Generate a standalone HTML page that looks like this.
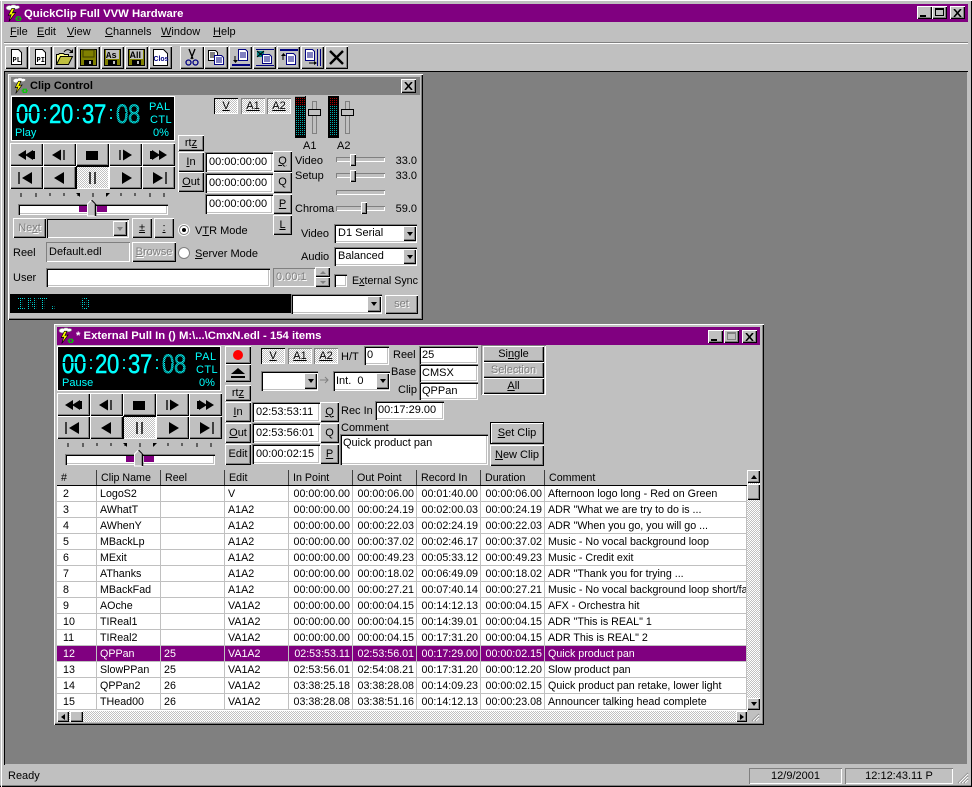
<!DOCTYPE html>
<html><head><meta charset="utf-8"><title>QuickClip</title>
<style>
*{box-sizing:border-box}
html,body{margin:0;padding:0}
body{width:972px;height:787px;position:relative;overflow:hidden;background:#c0c0c0;font:11px/13px "Liberation Sans",Arial,sans-serif;color:#000}
div,span.t,svg.a{position:absolute}
.t{position:absolute;white-space:nowrap;margin-top:1px}
.r{background:#c0c0c0;box-shadow:inset 1px 1px #fff,inset -1px -1px #000,inset -2px -2px #808080;display:flex;align-items:center;justify-content:center;white-space:nowrap}
.s{background:#fff;box-shadow:inset 1px 1px #808080,inset 2px 2px #000,inset -1px -1px #fff,inset -2px -2px #c0c0c0;display:flex;align-items:center;padding-left:4px;white-space:nowrap;overflow:hidden}
.d{background:#c0c0c0;box-shadow:inset 1px 1px #808080,inset -1px -1px #fff;display:flex;align-items:center;padding-left:3px;white-space:nowrap}
.h{background:conic-gradient(#fff 25%,#c0c0c0 0 50%,#fff 0 75%,#c0c0c0 0) 0 0/2px 2px}
.off{color:#808080;text-shadow:1px 1px #fff}
.dn{width:0;height:0;border-left:3px solid transparent;border-right:3px solid transparent;border-top:4px solid #000;display:block}
.up{width:0;height:0;border-left:3px solid transparent;border-right:3px solid transparent;border-bottom:4px solid #000;display:block}
.lf{width:0;height:0;border-top:3px solid transparent;border-bottom:3px solid transparent;border-right:4px solid #000;display:block}
.rt{width:0;height:0;border-top:3px solid transparent;border-bottom:3px solid transparent;border-left:4px solid #000;display:block}
.tog{background:conic-gradient(#fff 25%,#c0c0c0 0 50%,#fff 0 75%,#c0c0c0 0) 0 0/2px 2px;box-shadow:inset 1px 1px #000,inset -1px -1px #fff;display:flex;align-items:center;justify-content:center}
table{border-collapse:separate;border-spacing:0;table-layout:fixed;background:#fff;font:10.7px/13px "Liberation Sans",Arial,sans-serif}
td{height:16px;padding:2px 0 0 3px;border-right:1px solid #c0c0c0;border-bottom:1px solid #c0c0c0;white-space:nowrap;overflow:hidden}
td.n{text-align:right;padding:2px 2px 0 0}
td.c{padding-left:6px}
td.m{padding-left:3px}
tr.sel td{background:#800080;color:#fff}
.hd{height:15px;top:470px;border-right:1px solid #404040;padding-left:4px;white-space:nowrap;line-height:16px;font-size:10.7px}
.title{color:#fff;font-weight:bold;font-size:11.3px;line-height:17px;white-space:nowrap}
</style></head>
<body>
<svg width="0" height="0" style="position:absolute">
<defs>
<symbol id="ic" viewBox="0 0 16 16"><path d="M1 3.5c0-2 3-2.500 4-2 1-1 4-1 5 0 2-.5 3 .5 3 1.500-1 1.500-3 1.500-4 1.500l-4 1c-2 0-4-.5-4-2z" fill="#fff" stroke="#808080" stroke-width=".6"/><path d="M6 4l-3 6 2.500-.5-2 6 6-8-3 .5 2-4z" fill="#ff0" stroke="#000" stroke-width=".6"/><path d="M9 13h2M13 13h2" stroke="#0c0" stroke-width="1"/><rect x="10.500" y="11.500" width="3" height="3" fill="none" stroke="#0c0"/></symbol>
<symbol id="i1" viewBox="0 0 33 22"><path d="M8 11l8-5v10zM15 11l8-5v10z"/><rect x="23" y="7" width="2" height="8"/></symbol>
<symbol id="i2" viewBox="0 0 33 22"><path d="M9 11l9-5.500v11z"/><rect x="20" y="6" width="2" height="10" fill="#404040"/></symbol>
<symbol id="i3" viewBox="0 0 33 22"><rect x="10" y="7" width="12" height="9"/></symbol>
<symbol id="i4" viewBox="0 0 33 22"><rect x="10" y="6" width="2" height="10" fill="#404040"/><path d="M14 5.500l9 5.500-9 5.500z"/></symbol>
<symbol id="i5" viewBox="0 0 33 22"><rect x="8" y="7" width="2" height="8"/><path d="M10 6l8 5-8 5zM17 6l8 5-8 5z"/></symbol>
<symbol id="i6" viewBox="0 0 33 22"><rect x="8" y="5" width="2" height="12" fill="#404040"/><path d="M12 11l10-6v12z"/></symbol>
<symbol id="i7" viewBox="0 0 33 22"><path d="M11 11l10-6v12z"/></symbol>
<symbol id="i8" viewBox="0 0 33 22"><rect x="13" y="5" width="2" height="12" fill="#404040"/><rect x="18" y="5" width="2" height="12" fill="#404040"/></symbol>
<symbol id="i9" viewBox="0 0 33 22"><path d="M13 5l10 6-10 6z"/></symbol>
<symbol id="i10" viewBox="0 0 33 22"><path d="M11 5l10 6-10 6z"/><rect x="23" y="5" width="2" height="12" fill="#404040"/></symbol>
<pattern id="dot" width="2" height="2" patternUnits="userSpaceOnUse"><rect width="2" height="2" fill="#005858"/><rect width="1" height="1" fill="#0ff"/><rect x="1" y="1" width="1" height="1" fill="#0ff"/></pattern>
<pattern id="dim" width="2" height="2" patternUnits="userSpaceOnUse"><rect width="1" height="1" fill="#0dd"/></pattern>
<pattern id="meter" width="2" height="2" patternUnits="userSpaceOnUse"><rect width="1" height="1" fill="#0aa"/></pattern>
<pattern id="meterr" width="2" height="2" patternUnits="userSpaceOnUse"><rect width="1" height="1" fill="#a00"/></pattern>
</defs>
</svg>

<!-- main title -->
<div style="left:4px;top:4px;width:964px;height:18px;background:#800080"></div>
<svg class="a" style="left:5px;top:4px" width="18" height="18"><use href="#ic"/></svg>
<div class="title" style="left:24px;top:6px">QuickClip Full VVW Hardware</div>
<div class="r" style="left:917px;top:6px;width:15px;height:13px"><div style="left:3px;top:9px;width:6px;height:2px;background:#000"></div></div>
<div class="r" style="left:932px;top:6px;width:15px;height:13px"><div style="left:3px;top:2px;width:9px;height:8px;border:1px solid #000;border-top-width:2px"></div></div>
<div class="r" style="left:950px;top:6px;width:15px;height:13px"><svg width="9" height="8"><path d="M1 0l7 8M8 0l-7 8" stroke="#000" stroke-width="1.600"/></svg></div>

<!-- menu -->
<span class="t" style="left:10px;top:25px"><u>F</u>ile</span>
<span class="t" style="left:37px;top:25px"><u>E</u>dit</span>
<span class="t" style="left:67px;top:25px"><u>V</u>iew</span>
<span class="t" style="left:105px;top:25px"><u>C</u>hannels</span>
<span class="t" style="left:161px;top:25px"><u>W</u>indow</span>
<span class="t" style="left:213px;top:25px"><u>H</u>elp</span>
<div style="left:4px;top:42px;width:964px;height:1px;background:#808080"></div>
<div style="left:4px;top:43px;width:964px;height:1px;background:#fff"></div>

<!-- toolbar -->
<div class="r" style="left:5px;top:46px;width:23px;height:23px"><svg width="23" height="23"><path d="M6.500 3.500h7l3 3v12h-10z" fill="#fff" stroke="#000"/><text x="7.500" y="16" font-family="Liberation Mono" font-weight="bold" font-size="7">PL</text></svg></div>
<div class="r" style="left:29px;top:46px;width:23px;height:23px"><svg width="23" height="23"><path d="M6.500 3.500h7l3 3v12h-10z" fill="#fff" stroke="#000"/><text x="7.500" y="16" font-family="Liberation Mono" font-weight="bold" font-size="7">PI</text></svg></div>
<div class="r" style="left:53px;top:46px;width:23px;height:23px"><svg width="23" height="23"><path d="M3.500 18.500v-10h2l1-1h4l1 1h4v2" fill="#ff8" stroke="#000"/><path d="M3.500 18.500l4-8h12l-4 8z" fill="#c0c040" stroke="#000"/><path d="M11 6c2-3 5-3 7-1" fill="none" stroke="#000"/><path d="M20 3v4h-4z"/></svg></div>
<div class="r" style="left:77px;top:46px;width:23px;height:23px"><svg width="23" height="23"><rect x="3.500" y="3.500" width="16" height="16" fill="#808000" stroke="#000"/><rect x="6" y="4" width="11" height="7" fill="#808000" stroke="#404000"/><rect x="7" y="14" width="9" height="5" fill="#000"/><rect x="12" y="15" width="2" height="3" fill="#c0c0c0"/></svg></div>
<div class="r" style="left:101px;top:46px;width:23px;height:23px"><svg width="23" height="23"><rect x="3.500" y="3.500" width="16" height="16" fill="#808000" stroke="#000"/><rect x="5" y="4" width="13" height="9" fill="#c0c0c0"/><text x="5" y="12" font-family="Liberation Mono" font-weight="bold" font-size="9">As</text><rect x="7" y="14" width="9" height="5" fill="#000"/><rect x="12" y="15" width="2" height="3" fill="#c0c0c0"/></svg></div>
<div class="r" style="left:125px;top:46px;width:23px;height:23px"><svg width="23" height="23"><rect x="3.500" y="3.500" width="16" height="16" fill="#808000" stroke="#000"/><rect x="5" y="4" width="13" height="9" fill="#c0c0c0"/><text x="4.500" y="12" font-family="Liberation Sans" font-weight="bold" font-size="9">All</text><rect x="7" y="14" width="9" height="5" fill="#000"/><rect x="12" y="15" width="2" height="3" fill="#c0c0c0"/></svg></div>
<div class="r" style="left:149px;top:46px;width:23px;height:23px"><svg width="23" height="23"><path d="M4.500 3.500h10l4 4v12h-14z" fill="#fff" stroke="#000"/><text x="4.500" y="15" font-family="Liberation Sans" font-weight="bold" font-size="7.500" fill="#000080" textLength="15" lengthAdjust="spacingAndGlyphs">Clos</text></svg></div>

<div class="r" style="left:180px;top:46px;width:24px;height:23px"><svg width="24" height="23"><path d="M9 3l4 10M15 3l-4 10" stroke="#000" stroke-width="1.300"/><circle cx="8.500" cy="16.500" r="2.500" fill="none" stroke="#000080" stroke-width="1.300"/><circle cx="15.500" cy="16.500" r="2.500" fill="none" stroke="#000080" stroke-width="1.300"/></svg></div>
<div class="r" style="left:204px;top:46px;width:24px;height:23px"><svg width="24" height="23"><path d="M4.500 4.500h7l2 2v8h-9z" fill="#fff" stroke="#000"/><path d="M6 7h5M6 9h5M6 11h5" stroke="#000"/><path d="M10.500 9.500h7l2 2v7h-9z" fill="#fff" stroke="#000080"/><path d="M12 12h6M12 14h6M12 16h6" stroke="#000080"/></svg></div>
<div class="r" style="left:229px;top:46px;width:23px;height:23px"><svg width="23" height="23"><path d="M9.500 3.500h7l2 2v9h-9z" fill="#fff" stroke="#000080"/><path d="M11 7h6M11 9h6M11 11h6" stroke="#000080"/><path d="M6 10v5" stroke="#000"/><path d="M4 14h5l-2.500 3z"/><rect x="3" y="18" width="18" height="2" fill="#000080"/></svg></div>
<div class="r" style="left:253px;top:46px;width:23px;height:23px"><svg width="23" height="23"><rect x="3" y="3" width="18" height="1" fill="#000080"/><rect x="3" y="19" width="18" height="1" fill="#000080"/><rect x="4" y="5" width="7" height="6" fill="#008080"/><path d="M4 5l7 6M11 5l-7 6" stroke="#000"/><path d="M9.500 8.500h7l2 2v7h-9z" fill="#fff" stroke="#000080"/><path d="M11 11h6M11 13h6M11 15h6" stroke="#000080"/></svg></div>
<div class="r" style="left:277px;top:46px;width:23px;height:23px"><svg width="23" height="23"><rect x="3" y="3" width="18" height="2" fill="#000080"/><path d="M9.500 7.500h7l2 2v9h-9z" fill="#fff" stroke="#000080"/><path d="M11 11h6M11 13h6M11 15h6" stroke="#000080"/><path d="M6 9v5" stroke="#000"/><path d="M4 10h5l-2.500-3z"/></svg></div>
<div class="r" style="left:301px;top:46px;width:23px;height:23px"><svg width="23" height="23"><path d="M4.500 3.500h7l2 2v9h-9z" fill="#fff" stroke="#000080"/><path d="M6 7h6M6 9h6M6 11h6" stroke="#000080"/><path d="M8 17h6" stroke="#000"/><path d="M13 15v4l3-2z"/><rect x="16" y="3" width="1" height="17" fill="#000080"/><rect x="19" y="3" width="1" height="17" fill="#000080"/></svg></div>
<div class="r" style="left:325px;top:46px;width:23px;height:23px"><svg width="23" height="23"><path d="M5 5l13 13M18 5L5 18" stroke="#000" stroke-width="2.400"/></svg></div>

<!-- MDI -->
<div style="left:4px;top:71px;width:964px;height:694px;background:#808080;box-shadow:inset 1px 1px #000,inset -1px -1px #c0c0c0"></div>

<!-- Clip Control window -->
<div class="r" style="left:8px;top:74px;width:415px;height:246px"></div>
<div style="left:11px;top:77px;width:409px;height:18px;background:#808080"></div>
<svg class="a" style="left:12px;top:77px" width="17" height="17"><use href="#ic"/></svg>
<div class="title" style="left:30px;top:78px;color:#000;font-size:11px">Clip Control</div>
<div class="r" style="left:401px;top:79px;width:15px;height:14px"><svg width="9" height="8"><path d="M1 0l7 8M8 0l-7 8" stroke="#000" stroke-width="1.600"/></svg></div>

<div style="left:11px;top:96px;width:164px;height:45px;background:#000;border:1px solid #fff"></div>
<svg class="a" style="left:12px;top:97px" width="162" height="43"><g transform="translate(-12,-97)">
<g font-family="Liberation Sans" fill="#0ff">
<text transform="translate(0,123) scale(.82,1)" font-size="27" stroke="#0ff" stroke-width=".5" x="19.500 34.100 59.800 74.400 100 114.600">002037</text>
<text font-size="18" x="42.500 75.500 108.500" y="119">:::</text>
<text transform="translate(0,123) scale(.82,1)" font-size="27" x="141.500 156.100" fill="url(#dot)" stroke="url(#dot)" stroke-width=".6">08</text>
<rect x="16" y="112" width="26" height="1" fill="#000"/><rect x="118" y="112" width="8" height="1" fill="#000"/>
<text x="149" y="110" font-size="11" letter-spacing=".6">PAL</text><text x="150" y="123" font-size="11" letter-spacing=".4">CTL</text>
<text x="15" y="136" font-size="11">Play</text><text x="153" y="136" font-size="11">0%</text>
</g></g></svg>

<div class="r" style="left:10px;top:143px;width:33px;height:23px"><svg width="33" height="22"><use href="#i1"/></svg></div>
<div class="r" style="left:43px;top:143px;width:33px;height:23px"><svg width="33" height="22"><use href="#i2"/></svg></div>
<div class="r" style="left:76px;top:143px;width:33px;height:23px"><svg width="33" height="22"><use href="#i3"/></svg></div>
<div class="r" style="left:109px;top:143px;width:33px;height:23px"><svg width="33" height="22"><use href="#i4"/></svg></div>
<div class="r" style="left:142px;top:143px;width:33px;height:23px"><svg width="33" height="22"><use href="#i5"/></svg></div>
<div class="r" style="left:10px;top:166px;width:33px;height:23px"><svg width="33" height="22"><use href="#i6"/></svg></div>
<div class="r" style="left:43px;top:166px;width:33px;height:23px"><svg width="33" height="22"><use href="#i7"/></svg></div>
<div class="tog" style="left:76px;top:166px;width:33px;height:23px"><svg width="33" height="22"><use href="#i8"/></svg></div>
<div class="r" style="left:109px;top:166px;width:33px;height:23px"><svg width="33" height="22"><use href="#i9"/></svg></div>
<div class="r" style="left:142px;top:166px;width:33px;height:23px"><svg width="33" height="22"><use href="#i10"/></svg></div>

<svg class="a" style="left:10px;top:190px" width="170" height="30"><path d="M11 3v4M26 3v4M40 3v3M54 3v3M68 3v3M97 3v3M111 3v3M125 3v3M140 3v4M154 3v4M83 3v4" stroke="#000"/><path d="M66 3l4 0 0 4zM100 3l-4 0 0 4z"/></svg>
<div class="s" style="left:18px;top:204px;width:150px;height:11px;background:#fff"></div>
<div style="left:79px;top:206px;width:9px;height:6px;background:#800080"></div>
<div style="left:97px;top:206px;width:10px;height:6px;background:#800080"></div>
<svg class="a" style="left:86px;top:199px" width="12" height="18"><path d="M1.500 17V5L5.500 1 9.500 5V17z" fill="#c0c0c0" stroke="#fff"/><path d="M9.500 5V17" stroke="#000" stroke-width="1.500"/><path d="M5.500 1L9.500 5" stroke="#000"/></svg>

<div class="r off" style="left:13px;top:218px;width:33px;height:20px">Ne<u>x</u>t</div>
<div class="d" style="left:47px;top:219px;width:82px;height:19px;box-shadow:inset 1px 1px #000,inset -1px -1px #fff"></div>
<div class="r" style="left:113px;top:221px;width:14px;height:15px"><i style="border-top-color:#808080" class="dn"></i></div>
<div class="r" style="left:132px;top:218px;width:20px;height:20px"><u>±</u></div>
<div class="r" style="left:154px;top:218px;width:20px;height:20px"><u>:</u></div>
<svg class="a" style="left:177px;top:223px" width="14" height="14"><circle cx="7" cy="7" r="5.500" fill="#c0c0c0" stroke="#fff"/><circle cx="7" cy="7" r="4.500" fill="#fff" stroke="#808080"/><circle cx="7" cy="7" r="2"/></svg>
<span class="t" style="left:195px;top:224px">V<u>T</u>R Mode</span>
<span class="t" style="left:13px;top:246px">Reel</span>
<div class="d" style="left:46px;top:242px;width:84px;height:20px;box-shadow:inset 1px 1px #808080,inset -1px -1px #fff">Default.edl</div>
<div class="r off" style="left:132px;top:242px;width:44px;height:20px"><u>B</u>rowse</div>
<svg class="a" style="left:177px;top:246px" width="14" height="14"><circle cx="7" cy="7" r="5.500" fill="#fff" stroke="#808080"/></svg>
<span class="t" style="left:195px;top:247px"><u>S</u>erver Mode</span>
<span class="t" style="left:13px;top:271px">User</span>
<div class="s" style="left:46px;top:268px;width:224px;height:19px"></div>
<div class="d off" style="left:273px;top:268px;width:42px;height:19px">0.00:1</div>
<div class="r" style="left:315px;top:267px;width:15px;height:10px"><i class="up" style="border-bottom-color:#808080;border-bottom-width:3px"></i></div>
<div class="r" style="left:315px;top:277px;width:15px;height:10px"><i class="dn" style="border-top-color:#808080;border-top-width:3px"></i></div>
<div class="s" style="left:334px;top:274px;width:13px;height:13px"></div>
<span class="t" style="left:352px;top:274px;font-size:10.7px">E<u>x</u>ternal Sync</span>

<div style="left:10px;top:294px;width:281px;height:19px;background:#000"></div>
<svg class="a" style="left:10px;top:294px" width="120" height="19"><text x="6 17 28 38 70" y="15" font-family="Liberation Mono" font-size="17" fill="url(#dim)" stroke="url(#dim)" stroke-width=".6">INT.0</text></svg>
<div class="s" style="left:291px;top:294px;width:91px;height:20px"></div>
<div class="r" style="left:367px;top:296px;width:14px;height:16px"><i class="dn"></i></div>
<div class="r off" style="left:385px;top:295px;width:33px;height:19px">set</div>

<div class="tog" style="left:214px;top:98px;width:24px;height:16px"><u>V</u></div>
<div class="tog" style="left:241px;top:98px;width:24px;height:16px;box-shadow:inset 1px 1px #808080,inset -1px -1px #fff"><u>A1</u></div>
<div class="tog" style="left:267px;top:98px;width:24px;height:16px;box-shadow:inset 1px 1px #808080,inset -1px -1px #fff"><u>A2</u></div>

<svg class="a" style="left:294px;top:96px" width="65" height="42">
<rect x="1" y="0" width="11" height="42" fill="#000"/><rect x="2" y="2" width="9" height="7" fill="url(#meterr)"/><rect x="2" y="9" width="9" height="31" fill="url(#meter)"/><rect x="1" y="0" width="10" height="1" fill="#fff" opacity=".6"/>
<rect x="34" y="0" width="11" height="42" fill="#000"/><rect x="35" y="2" width="9" height="7" fill="url(#meterr)"/><rect x="35" y="9" width="9" height="31" fill="url(#meter)"/>
<rect x="18.500" y="5.500" width="4" height="32" fill="#c0c0c0" stroke="#808080"/><rect x="51.500" y="5.500" width="4" height="32" fill="#c0c0c0" stroke="#808080"/>
<rect x="14.500" y="13.500" width="12" height="6" fill="#c0c0c0" stroke="#000"/><rect x="47.500" y="13.500" width="12" height="6" fill="#c0c0c0" stroke="#000"/>
</svg>
<span class="t" style="left:303px;top:139px">A1</span>
<span class="t" style="left:337px;top:139px">A2</span>

<div class="r" style="left:178px;top:135px;width:26px;height:16px"><u style="text-decoration:none">rt<u>z</u></u></div>
<div class="r" style="left:178px;top:152px;width:26px;height:20px"><u>I</u>n</div>
<div class="r" style="left:178px;top:172px;width:26px;height:20px"><u>O</u>ut</div>
<div class="s" style="left:205px;top:152px;width:68px;height:20px">00:00:00:00</div>
<div class="s" style="left:205px;top:173px;width:68px;height:20px">00:00:00:00</div>
<div class="s" style="left:205px;top:194px;width:68px;height:20px">00:00:00:00</div>
<div class="r" style="left:273px;top:151px;width:19px;height:21px"><u>Q</u></div>
<div class="r" style="left:273px;top:172px;width:19px;height:21px">Q</div>
<div class="r" style="left:273px;top:194px;width:19px;height:20px"><u>P</u></div>
<div class="r" style="left:273px;top:215px;width:19px;height:20px"><u>L</u></div>

<span class="t" style="left:295px;top:154px">Video</span>
<span class="t" style="left:295px;top:169px">Setup</span>
<span class="t" style="left:295px;top:202px">Chroma</span>
<div class="d" style="left:336px;top:157px;width:49px;height:5px"></div>
<div class="d" style="left:336px;top:173px;width:49px;height:5px"></div>
<div class="d" style="left:336px;top:190px;width:49px;height:5px"></div>
<div class="d" style="left:336px;top:206px;width:49px;height:5px"></div>
<div class="r" style="left:350px;top:154px;width:6px;height:12px"></div>
<div class="r" style="left:350px;top:170px;width:6px;height:12px"></div>
<div class="r" style="left:361px;top:202px;width:6px;height:12px"></div>
<span class="t" style="left:386px;width:31px;text-align:right;top:154px">33.0</span>
<span class="t" style="left:386px;width:31px;text-align:right;top:169px">33.0</span>
<span class="t" style="left:386px;width:31px;text-align:right;top:202px">59.0</span>

<span class="t" style="left:301px;top:227px">Video</span>
<span class="t" style="left:301px;top:250px">Audio</span>
<div class="s" style="left:334px;top:224px;width:83px;height:19px">D1 Serial</div>
<div class="r" style="left:403px;top:226px;width:13px;height:15px"><i class="dn"></i></div>
<div class="s" style="left:334px;top:247px;width:83px;height:19px">Balanced</div>
<div class="r" style="left:403px;top:249px;width:13px;height:15px"><i class="dn"></i></div>

<!-- External Pull In window -->
<div class="r" style="left:54px;top:324px;width:710px;height:401px"></div>
<div style="left:57px;top:327px;width:703px;height:18px;background:#800080"></div>
<svg class="a" style="left:58px;top:327px" width="17" height="17"><use href="#ic"/></svg>
<div class="title" style="left:76px;top:328px">* External Pull In () M:\...\CmxN.edl - 154 items</div>
<div class="r" style="left:708px;top:330px;width:15px;height:13px"><div style="left:3px;top:9px;width:6px;height:2px;background:#000"></div></div>
<div class="r" style="left:724px;top:330px;width:15px;height:13px"><div style="left:3px;top:2px;width:9px;height:8px;border:1px solid #808080;border-top-width:2px"></div></div>
<div class="r" style="left:742px;top:330px;width:15px;height:13px"><svg width="9" height="8"><path d="M1 0l7 8M8 0l-7 8" stroke="#000" stroke-width="1.600"/></svg></div>

<div style="left:57px;top:346px;width:164px;height:45px;background:#000;border:1px solid #fff"></div>
<svg class="a" style="left:58px;top:347px" width="162" height="43"><g transform="translate(-12,-97)">
<g font-family="Liberation Sans" fill="#0ff">
<text transform="translate(0,123) scale(.82,1)" font-size="27" stroke="#0ff" stroke-width=".5" x="19.500 34.100 59.800 74.400 100 114.600">002037</text>
<text font-size="18" x="42.500 75.500 108.500" y="119">:::</text>
<text transform="translate(0,123) scale(.82,1)" font-size="27" x="141.500 156.100" fill="url(#dot)" stroke="url(#dot)" stroke-width=".6">08</text>
<rect x="16" y="112" width="26" height="1" fill="#000"/><rect x="118" y="112" width="8" height="1" fill="#000"/>
<text x="149" y="110" font-size="11" letter-spacing=".6">PAL</text><text x="150" y="123" font-size="11" letter-spacing=".4">CTL</text>
<text x="16" y="136" font-size="11">Pause</text><text x="153" y="136" font-size="11">0%</text>
</g></g></svg>

<div class="r" style="left:57px;top:393px;width:33px;height:23px"><svg width="33" height="22"><use href="#i1"/></svg></div>
<div class="r" style="left:90px;top:393px;width:33px;height:23px"><svg width="33" height="22"><use href="#i2"/></svg></div>
<div class="r" style="left:123px;top:393px;width:33px;height:23px"><svg width="33" height="22"><use href="#i3"/></svg></div>
<div class="r" style="left:156px;top:393px;width:33px;height:23px"><svg width="33" height="22"><use href="#i4"/></svg></div>
<div class="r" style="left:189px;top:393px;width:33px;height:23px"><svg width="33" height="22"><use href="#i5"/></svg></div>
<div class="r" style="left:57px;top:416px;width:33px;height:23px"><svg width="33" height="22"><use href="#i6"/></svg></div>
<div class="r" style="left:90px;top:416px;width:33px;height:23px"><svg width="33" height="22"><use href="#i7"/></svg></div>
<div class="tog" style="left:123px;top:416px;width:33px;height:23px"><svg width="33" height="22"><use href="#i8"/></svg></div>
<div class="r" style="left:156px;top:416px;width:33px;height:23px"><svg width="33" height="22"><use href="#i9"/></svg></div>
<div class="r" style="left:189px;top:416px;width:33px;height:23px"><svg width="33" height="22"><use href="#i10"/></svg></div>

<svg class="a" style="left:57px;top:440px" width="170" height="30"><path d="M11 3v4M26 3v4M40 3v3M54 3v3M68 3v3M97 3v3M111 3v3M125 3v3M140 3v4M154 3v4M83 3v4" stroke="#000"/><path d="M66 3l4 0 0 4zM100 3l-4 0 0 4z"/></svg>
<div class="s" style="left:65px;top:454px;width:150px;height:11px"></div>
<div style="left:126px;top:456px;width:9px;height:6px;background:#800080"></div>
<div style="left:144px;top:456px;width:10px;height:6px;background:#800080"></div>
<svg class="a" style="left:133px;top:449px" width="12" height="18"><path d="M1.500 17V5L5.500 1 9.500 5V17z" fill="#c0c0c0" stroke="#fff"/><path d="M9.500 5V17" stroke="#000" stroke-width="1.500"/><path d="M5.500 1L9.500 5" stroke="#000"/></svg>

<div class="r" style="left:225px;top:346px;width:26px;height:18px"><svg width="12" height="12"><circle cx="6" cy="6" r="5" fill="#f00"/></svg></div>
<div class="r" style="left:225px;top:364px;width:26px;height:18px"><svg width="16" height="11"><path d="M1 6l7-6 7 6zM1 8h14v2H1z"/></svg></div>
<div class="r" style="left:225px;top:385px;width:26px;height:16px">rt<u>z</u></div>
<div class="r" style="left:225px;top:402px;width:26px;height:20px"><u>I</u>n</div>
<div class="r" style="left:225px;top:423px;width:26px;height:20px"><u>O</u>ut</div>
<div class="r" style="left:225px;top:444px;width:26px;height:21px">Edit</div>
<div class="s" style="left:252px;top:402px;width:68px;height:20px">02:53:53:11</div>
<div class="s" style="left:252px;top:423px;width:68px;height:20px">02:53:56:01</div>
<div class="s" style="left:252px;top:444px;width:68px;height:20px">00:00:02:15</div>
<div class="r" style="left:320px;top:402px;width:19px;height:20px"><u>Q</u></div>
<div class="r" style="left:320px;top:423px;width:19px;height:20px">Q</div>
<div class="r" style="left:320px;top:444px;width:19px;height:20px"><u>P</u></div>

<div class="tog" style="left:261px;top:348px;width:24px;height:16px"><u>V</u></div>
<div class="tog" style="left:288px;top:348px;width:24px;height:16px;box-shadow:inset 1px 1px #808080,inset -1px -1px #fff"><u>A1</u></div>
<div class="tog" style="left:314px;top:348px;width:24px;height:16px;box-shadow:inset 1px 1px #808080,inset -1px -1px #fff"><u>A2</u></div>
<span class="t" style="left:341px;top:350px">H/T</span>
<div class="s" style="left:364px;top:346px;width:25px;height:19px;padding-left:3px">0</div>
<span class="t" style="left:393px;top:348px">Reel</span>
<span class="t" style="left:391px;top:365px">Base</span>
<span class="t" style="left:398px;top:383px">Clip</span>
<div class="s" style="left:419px;top:346px;width:59px;height:18px;padding-left:3px">25</div>
<div class="s" style="left:419px;top:364px;width:59px;height:18px;padding-left:3px">CMSX</div>
<div class="s" style="left:419px;top:382px;width:59px;height:18px;padding-left:3px">QPPan</div>
<div style="left:481px;top:345px;width:65px;height:50px;box-shadow:inset 1px 1px #808080,inset -1px -1px #fff"></div>
<div class="r" style="left:483px;top:346px;width:61px;height:16px">Si<u>n</u>gle</div>
<div class="r off" style="left:483px;top:362px;width:61px;height:16px">Selection</div>
<div class="r" style="left:483px;top:378px;width:61px;height:16px"><u>A</u>ll</div>
<div class="s" style="left:261px;top:371px;width:57px;height:20px"></div>
<div class="r" style="left:304px;top:373px;width:13px;height:16px"><i class="dn"></i></div>
<svg class="a" style="left:319px;top:375px" width="12" height="10"><path d="M1 5h8M6 2l3 3-3 3" fill="none" stroke="#808080"/></svg>
<div class="s" style="left:333px;top:371px;width:57px;height:20px;padding-left:3px;white-space:pre">Int.  0</div>
<div class="r" style="left:376px;top:373px;width:13px;height:16px"><i class="dn"></i></div>
<span class="t" style="left:341px;top:404px">Rec In</span>
<div class="s" style="left:375px;top:401px;width:69px;height:19px;padding-left:3px">00:17:29.00</div>
<span class="t" style="left:341px;top:421px">Comment</span>
<div class="s" style="left:340px;top:434px;width:148px;height:31px;padding-left:3px;align-items:flex-start;padding-top:3px">Quick product pan</div>
<div class="r" style="left:490px;top:422px;width:54px;height:22px;box-shadow:inset 0 0 0 1px #000,inset 2px 2px #fff,inset -2px -2px #808080"><u>S</u>et Clip</div>
<div class="r" style="left:490px;top:445px;width:54px;height:21px"><u>N</u>ew Clip</div>

<!-- list header -->
<div style="left:57px;top:470px;width:690px;height:15px;background:#c0c0c0"></div>
<div class="hd" style="left:57px;width:40px">#</div>
<div class="hd" style="left:97px;width:64px">Clip Name</div>
<div class="hd" style="left:161px;width:64px">Reel</div>
<div class="hd" style="left:225px;width:64px">Edit</div>
<div class="hd" style="left:289px;width:64px">In Point</div>
<div class="hd" style="left:353px;width:64px">Out Point</div>
<div class="hd" style="left:417px;width:64px">Record In</div>
<div class="hd" style="left:481px;width:64px">Duration</div>
<div class="hd" style="left:545px;width:150px;border-right:0">Comment</div>
<div style="left:57px;top:485px;width:690px;height:1px;background:#000"></div>

<!-- list -->
<div style="left:57px;top:486px;width:690px;height:225px;background:#fff;overflow:hidden">
<table style="width:690px"><colgroup><col style="width:40px"><col style="width:64px"><col style="width:64px"><col style="width:64px"><col style="width:64px"><col style="width:64px"><col style="width:64px"><col style="width:64px"><col style="width:202px"></colgroup>
<tr><td class="c">2</td><td>LogoS2</td><td></td><td>V</td><td class="n">00:00:00.00</td><td class="n">00:00:06.00</td><td class="n">00:01:40.00</td><td class="n">00:00:06.00</td><td class="m">Afternoon logo long - Red on Green</td></tr>
<tr><td class="c">3</td><td>AWhatT</td><td></td><td>A1A2</td><td class="n">00:00:00.00</td><td class="n">00:00:24.19</td><td class="n">00:02:00.03</td><td class="n">00:00:24.19</td><td class="m">ADR "What we are try to do is ...</td></tr>
<tr><td class="c">4</td><td>AWhenY</td><td></td><td>A1A2</td><td class="n">00:00:00.00</td><td class="n">00:00:22.03</td><td class="n">00:02:24.19</td><td class="n">00:00:22.03</td><td class="m">ADR "When you go, you will go ...</td></tr>
<tr><td class="c">5</td><td>MBackLp</td><td></td><td>A1A2</td><td class="n">00:00:00.00</td><td class="n">00:00:37.02</td><td class="n">00:02:46.17</td><td class="n">00:00:37.02</td><td class="m">Music - No vocal background loop</td></tr>
<tr><td class="c">6</td><td>MExit</td><td></td><td>A1A2</td><td class="n">00:00:00.00</td><td class="n">00:00:49.23</td><td class="n">00:05:33.12</td><td class="n">00:00:49.23</td><td class="m">Music - Credit exit</td></tr>
<tr><td class="c">7</td><td>AThanks</td><td></td><td>A1A2</td><td class="n">00:00:00.00</td><td class="n">00:00:18.02</td><td class="n">00:06:49.09</td><td class="n">00:00:18.02</td><td class="m">ADR "Thank you for trying ...</td></tr>
<tr><td class="c">8</td><td>MBackFad</td><td></td><td>A1A2</td><td class="n">00:00:00.00</td><td class="n">00:00:27.21</td><td class="n">00:07:40.14</td><td class="n">00:00:27.21</td><td class="m">Music - No vocal background loop short/fa</td></tr>
<tr><td class="c">9</td><td>AOche</td><td></td><td>VA1A2</td><td class="n">00:00:00.00</td><td class="n">00:00:04.15</td><td class="n">00:14:12.13</td><td class="n">00:00:04.15</td><td class="m">AFX - Orchestra hit</td></tr>
<tr><td class="c">10</td><td>TIReal1</td><td></td><td>VA1A2</td><td class="n">00:00:00.00</td><td class="n">00:00:04.15</td><td class="n">00:14:39.01</td><td class="n">00:00:04.15</td><td class="m">ADR "This is REAL" 1</td></tr>
<tr><td class="c">11</td><td>TIReal2</td><td></td><td>VA1A2</td><td class="n">00:00:00.00</td><td class="n">00:00:04.15</td><td class="n">00:17:31.20</td><td class="n">00:00:04.15</td><td class="m">ADR This is REAL" 2</td></tr>
<tr class="sel"><td class="c">12</td><td>QPPan</td><td>25</td><td>VA1A2</td><td class="n">02:53:53.11</td><td class="n">02:53:56.01</td><td class="n">00:17:29.00</td><td class="n">00:00:02.15</td><td class="m">Quick product pan</td></tr>
<tr><td class="c">13</td><td>SlowPPan</td><td>25</td><td>VA1A2</td><td class="n">02:53:56.01</td><td class="n">02:54:08.21</td><td class="n">00:17:31.20</td><td class="n">00:00:12.20</td><td class="m">Slow product pan</td></tr>
<tr><td class="c">14</td><td>QPPan2</td><td>26</td><td>VA1A2</td><td class="n">03:38:25.18</td><td class="n">03:38:28.08</td><td class="n">00:14:09.23</td><td class="n">00:00:02.15</td><td class="m">Quick product pan retake, lower light</td></tr>
<tr><td class="c">15</td><td>THead00</td><td>26</td><td>VA1A2</td><td class="n">03:38:28.08</td><td class="n">03:38:51.16</td><td class="n">00:14:12.13</td><td class="n">00:00:23.08</td><td class="m">Announcer talking head complete</td></tr>
</table>
</div>

<!-- scrollbars -->
<div class="h" style="left:747px;top:470px;width:13px;height:240px"></div>
<div class="r" style="left:747px;top:470px;width:13px;height:13px"><i class="up"></i></div>
<div class="r" style="left:747px;top:484px;width:13px;height:16px"></div>
<div class="r" style="left:747px;top:698px;width:13px;height:12px"><i class="dn"></i></div>
<div class="h" style="left:57px;top:711px;width:690px;height:11px"></div>
<div class="r" style="left:57px;top:711px;width:12px;height:11px"><i class="lf"></i></div>
<div class="r" style="left:70px;top:711px;width:13px;height:11px"></div>
<div class="r" style="left:736px;top:711px;width:11px;height:11px"><i class="rt"></i></div>
<div style="left:748px;top:711px;width:12px;height:11px;background:#c0c0c0"></div>
<svg class="a" style="left:751px;top:713px" width="9" height="9"><path d="M8 1L1 8M8 4L4 8" stroke="#808080"/><path d="M8 2L2 8M8 5L5 8" stroke="#fff"/></svg>

<!-- status bar -->
<span class="t" style="left:8px;top:769px">Ready</span>
<div class="d" style="left:749px;top:768px;width:93px;height:16px;justify-content:center;padding:0">12/9/2001</div>
<div class="d" style="left:845px;top:768px;width:108px;height:16px;justify-content:center;padding:0">12:12:43.11 P</div>
<svg class="a" style="left:957px;top:772px" width="12" height="12"><path d="M11 1L1 11M11 4L4 11M11 7L7 11" stroke="#808080"/><path d="M11 2L2 11M11 5L5 11M11 8L8 11" stroke="#fff"/></svg>
<div style="left:0;top:785px;width:972px;height:1px;background:#808080"></div>
<div style="left:0;top:786px;width:972px;height:1px;background:#000"></div>
<div style="left:971px;top:0;width:1px;height:787px;background:#000"></div>
<div style="left:0;top:0;width:972px;height:1px;background:#fff"></div>
<div style="left:1px;top:0;width:1px;height:787px;background:#fff"></div>
</body></html>
